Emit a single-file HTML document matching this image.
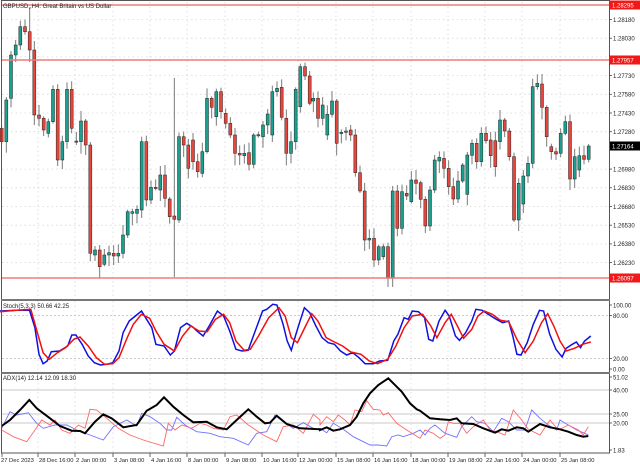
<!DOCTYPE html>
<html><head><meta charset="utf-8">
<style>
html,body{margin:0;padding:0;background:#fff;}
svg{display:block;font-family:"Liberation Sans",sans-serif;}
</style></head>
<body>
<svg id="s" width="640" height="465" viewBox="0 0 640 465" xmlns="http://www.w3.org/2000/svg">
<rect x="0" y="0" width="640" height="465" fill="#fff"/>
<g id="grid"></g>
<g id="main"></g>
<g id="stoch"></g>
<g id="adx"></g>
<g id="axes"></g>
</svg>
<script>
var NS="http://www.w3.org/2000/svg";
function el(p,t,a,txt){var e=document.createElementNS(NS,t);for(var k in a)e.setAttribute(k,a[k]);if(txt!==undefined)e.textContent=txt;document.getElementById(p).appendChild(e);return e;}
var plabels=["1.28180","1.28030","1.27730","1.27580","1.27430","1.27280","1.26980","1.26830","1.26680","1.26530","1.26380","1.26230"];
function py(p){return 131.7+(1.2728-p)/0.0015*18.7;}
plabels.forEach(function(l){var y=py(parseFloat(l));el("grid","line",{x1:2,x2:609,y1:y,y2:y,stroke:"#d8d8d8","stroke-width":0.8,"stroke-dasharray":"1.5,3"});});
el("grid","line",{x1:2,x2:609,y1:py(1.2788),y2:py(1.2788),stroke:"#d8d8d8","stroke-width":0.8,"stroke-dasharray":"1.5,3"});
var tl=[[2,"27 Dec 2023"],[38,"28 Dec 16:00"],[75,"2 Jan 00:00"],[113,"3 Jan 08:00"],[150,"4 Jan 16:00"],[187,"8 Jan 00:00"],[225,"9 Jan 08:00"],[262,"10 Jan 16:00"],[298,"12 Jan 00:00"],[336,"15 Jan 08:00"],[373,"16 Jan 16:00"],[411,"18 Jan 00:00"],[448,"19 Jan 08:00"],[485,"22 Jan 16:00"],[522,"24 Jan 00:00"],[560,"25 Jan 08:00"]];
tl.forEach(function(t,i){if(i>0){[[2,299],[301,372],[374,453]].forEach(function(r){el("grid","line",{x1:t[0],x2:t[0],y1:r[0],y2:r[1],stroke:"#d8d8d8","stroke-width":0.8,"stroke-dasharray":"1.5,3"});});}
 el("axes","line",{x1:t[0],x2:t[0],y1:453,y2:457,stroke:"#444","stroke-width":0.8});
 el("axes","text",{x:t[0]+ (i==0?-1:1),y:462,"font-size":5.8,fill:"#222"},t[1]);});
var L=[[385,425],[425,300],[295,165],[165,135],[135,80],[80,95],[95,150],[150,345],[345,355],[355,390],[400,365],[365,268],[268,480],[480,425],[425,268],[268,385],[423,426],[425,363],[363,435],[435,760],[765,750],[750,800],[793,765],[765,758],[760,768],[768,760],[760,705],[705,635],[640,635],[640,628],[630,425],[425,600],[600,562],[562,565],[570,525],[525,595],[597,650],[648,658],[660,410],[410,435],[435,505],[420,485],[485,515],[520,455],[455,295],[295,322],[350,275],[275,335],[340,370],[370,405],[405,460],[460,465],[467,460],[458,493],[493,405],[404,407],[410,375],[375,342],[405,275],[275,265],[262,352],[355,460],[460,425],[425,268],[320,200],[200,228],[228,310]];
var R=[[303,295],[295,355],[355,315],[405,343],[343,303],[303,430],[400,397],[397,393],[390,405],[405,518],[518,573],[573,720],[720,715],[715,780],[780,740],[770,740],[740,835],[835,573],[573,685],[685,575],[580,588],[605,540],[540,550],[548,598],[598,678],[678,570],[570,480],[483,472],[475,505],[505,560],[560,597],[597,543],[543,495],[583,465],[466,430],[430,485],[485,400],[400,422],[420,467],[422,500],[425,360],[360,393],[393,470],[470,660],[660,550],[612,528],[528,490],[490,260],[260,250],[252,322],[322,410],[440,455],[455,462],[460,400],[400,365],[365,537],[537,470],[510,467],[467,478],[478,438]];
var C=[];L.forEach(function(c,i){C.push([(5+14*i)/3,c[0]/3,c[1]/3]);});
R.forEach(function(c,k){C.push([300+(40+14*k)/3,c[0]/3,c[1]/3]);});
var ov={6:[8,null],12:[null,166],37:[78,277],21:[null,278]};
C.forEach(function(c,i){var x=c[0],o=c[1],cl=c[2];var t=Math.min(o,cl),b=Math.max(o,cl);
 var hi=t-(2+(i*37)%9),lo=b+(2+(i*53)%11);
 if(ov[i]){if(ov[i][0]!==null)hi=ov[i][0];if(ov[i][1]!==null)lo=ov[i][1];}
 if(lo>287)lo=287; if(hi<2)hi=2;
 el("main","line",{x1:x,x2:x,y1:hi,y2:lo,stroke:"#7a7a7a","stroke-width":1});
 var red=cl>o; if(b-t<1.2){b=t+1.2;}
 el("main","rect",{x:x-1.5,y:t,width:3,height:b-t,fill:red?"#e8463c":"#1aa08e",stroke:"#222","stroke-width":0.5});});
[5,60,278].forEach(function(y){el("main","line",{x1:2,x2:609,y1:y,y2:y,stroke:"#f07a7a","stroke-width":1.5});});
el("main","text",{x:3,y:8,"font-size":6,fill:"#222"},"GBPUSD,,H4:  Great Britain vs US Dollar");
function pts(a,sx,ox,sy,oy){return a.map(function(p){return (ox+p[0]/sx).toFixed(1)+","+(oy+p[1]/sy).toFixed(1);}).join(" ");}
el("stoch","line",{x1:2,x2:609,y1:315.5,y2:315.5,stroke:"#bbb","stroke-width":0.8,"stroke-dasharray":"2,2"});
el("stoch","line",{x1:2,x2:609,y1:358.5,y2:358.5,stroke:"#bbb","stroke-width":0.8,"stroke-dasharray":"2,2"});
var SB=[[0,150],[40,148],[72,148],[85,200],[95,280],[105,308],[115,300],[125,272],[145,270],[165,255],[175,222],[185,222],[200,250],[215,285],[230,305],[245,312],[260,310],[275,305],[290,270],[300,215],[315,180],[330,165],[345,150],[355,170],[370,200],[380,250],[400,255],[415,282],[425,270],[440,200],[455,187],[470,198],[480,210],[495,225],[510,195],[530,150],[545,165],[560,210],[575,265],[590,270],[605,268],[625,200],[640,150],[650,145],[665,130],[675,132],[690,190],[700,240],[710,268],[720,225],[730,185],[742,140],[755,155],[770,195],[785,230],[800,245],[815,250],[830,270],[845,282],[860,275],[875,290],[890,308],[910,308],[925,300],[945,298],[960,240],[970,220],[985,170],[995,175],[1005,150],[1020,152],[1035,170],[1045,235],[1055,240],[1070,180],[1085,148],[1095,165],[1110,225],[1120,238],[1135,215],[1150,180],[1160,145],[1175,148],[1190,160],[1210,175],[1225,185],[1240,180],[1250,225],[1260,280],[1270,282],[1285,245],[1300,190],[1315,148],[1325,150],[1340,220],[1355,265],[1370,288],[1380,262],[1395,250],[1405,243],[1415,260],[1425,240],[1440,225]];
var SR=[[0,152],[40,148],[75,145],[90,210],[105,275],[120,295],[140,275],[160,260],[180,235],[195,228],[215,255],[235,290],[255,310],[275,308],[290,290],[310,230],[325,190],[345,160],[365,172],[380,210],[400,250],[425,270],[445,225],[465,195],[485,210],[505,212],[525,175],[545,160],[560,185],[575,240],[595,268],[610,265],[630,225],[655,170],[680,140],[695,165],[710,230],[725,245],[745,195],[760,158],[775,180],[795,230],[815,243],[835,255],[855,273],[880,280],[900,300],[920,308],[945,295],[965,255],[985,200],[1005,165],[1030,160],[1050,195],[1065,230],[1085,185],[1100,160],[1115,195],[1130,232],[1150,205],[1165,165],[1180,150],[1200,160],[1220,178],[1240,182],[1260,235],[1280,275],[1300,240],[1320,185],[1335,158],[1350,195],[1365,240],[1380,270],[1400,262],[1420,250],[1440,243]];
el("stoch","polyline",{points:pts(SB,2.4375,0,3,261),fill:"none",stroke:"#1010e0","stroke-width":1.5});
el("stoch","polyline",{points:pts(SR,2.4375,0,3,261),fill:"none",stroke:"#f01010","stroke-width":1.5});
el("stoch","text",{x:3,y:308,"font-size":6,fill:"#222"},"Stoch(5,3,3) 50.66 42.25");
[390,414,423].forEach(function(y){el("adx","line",{x1:2,x2:609,y1:y,y2:y,stroke:"#dcdcdc","stroke-width":1.6});});
var AK=[[5,168],[30,150],[60,120],[88,90],[110,115],[150,145],[180,168],[215,182],[240,183],[255,190],[285,155],[310,133],[335,145],[370,172],[410,165],[440,122],[470,105],[492,82],[520,110],[550,135],[580,157],[620,155],[650,172],[680,178],[710,150],[745,118],[770,140],[795,160],[810,158],[830,137],[860,162],[900,175],[960,178]];
var AB=[[5,175],[30,125],[50,135],[85,128],[110,160],[130,175],[165,165],[200,165],[230,180],[270,195],[310,210],[340,170],[380,150],[410,168],[425,130],[450,140],[480,160],[500,180],[515,180],[530,142],[555,165],[590,185],[630,190],[660,200],[700,205],[745,225],[770,190],[800,185],[825,135],[850,155],[880,175],[910,158],[945,178],[960,175]];
var AR=[[5,180],[40,200],[80,215],[105,180],[125,150],[150,165],[165,150],[185,180],[210,190],[235,165],[255,175],[270,118],[290,120],[320,145],[355,175],[390,195],[430,210],[490,228],[505,160],[525,180],[545,165],[575,175],[600,160],[620,165],[640,175],[670,180],[690,140],[710,135],[745,165],[790,195],[830,215],[850,170],[880,165],[910,190],[940,133],[960,150]];
var AK2=[[0,180],[20,172],[40,182],[60,178],[90,165],[110,140],[130,100],[150,70],[175,45],[190,35],[205,25],[220,40],[245,65],[270,100],[290,118],[300,122],[330,145],[360,148],[390,150],[410,145],[425,160],[460,162],[490,175],[525,188],[545,178],[565,182],[590,172],[610,175],[625,185],[660,162],[690,172],[720,178],[745,185],[770,195],[790,200],[805,198]];
var AB2=[[0,175],[20,188],[40,160],[70,178],[100,200],[130,215],[150,225],[175,225],[200,228],[215,200],[235,195],[250,200],[280,190],[300,180],[315,195],[330,175],[345,165],[375,190],[410,202],[425,170],[455,140],[470,155],[495,160],[520,185],[545,145],[565,155],[590,180],[615,180],[635,120],[660,145],[685,165],[710,180],[720,150],[745,165],[770,180],[790,188],[805,195]];
var AR2=[[0,165],[20,140],[40,155],[55,135],[75,150],[90,165],[105,120],[125,125],[140,92],[160,118],[180,120],[190,135],[205,128],[230,160],[260,180],[300,205],[315,180],[340,190],[360,205],[375,195],[385,155],[400,160],[420,160],[440,190],[460,170],[490,150],[510,180],[530,185],[555,195],[580,120],[605,150],[625,178],[660,195],[690,150],[715,180],[745,165],[775,180],[790,195],[805,170]];
el("adx","polyline",{points:pts(AB,3,0,3,370)+" "+pts(AB2,3,320,3,370),fill:"none",stroke:"#7070ff","stroke-width":0.9});
el("adx","polyline",{points:pts(AR,3,0,3,370)+" "+pts(AR2,3,320,3,370),fill:"none",stroke:"#ff6868","stroke-width":0.9});
el("adx","polyline",{points:pts(AK,3,0,3,370)+" "+pts(AK2,3,320,3,370),fill:"none",stroke:"#000","stroke-width":2});
el("adx","text",{x:3,y:380,"font-size":6,fill:"#222"},"ADX(14) 12.14 12.09 18.30");
el("axes","rect",{x:1.5,y:0.5,width:608,height:452.5,fill:"none",stroke:"#555","stroke-width":1});
el("axes","line",{x1:1,x2:610,y1:300,y2:300,stroke:"#777","stroke-width":2});
el("axes","line",{x1:1,x2:610,y1:373,y2:373,stroke:"#777","stroke-width":2});
plabels.forEach(function(l){var y=py(parseFloat(l));el("axes","line",{x1:609,x2:612,y1:y,y2:y,stroke:"#444","stroke-width":0.8});el("axes","text",{x:613,y:y+2.3,"font-size":6,fill:"#222"},l);});
function box(y,t,c){el("axes","rect",{x:610,y:y-4.5,width:30,height:9,fill:c});el("axes","text",{x:612,y:y+2.3,"font-size":6,fill:"#fff"},t);}
box(5,"1.28295","#f01818");box(60,"1.27957","#f01818");box(278,"1.26097","#f01818");box(146,"1.27164","#000");
[[305,"100.00"],[315.5,"80.00"],[358.5,"20.00"],[369,"0.00"],[377,"51.02"],[390,"40.00"],[414,"25.00"],[423,"20.00"],[450,"1.83"]].forEach(function(a){el("axes","line",{x1:609,x2:612,y1:a[0],y2:a[0],stroke:"#444","stroke-width":0.8});el("axes","text",{x:613,y:a[0]+2.3,"font-size":6,fill:"#222"},a[1]);});
</script>
</body></html>
